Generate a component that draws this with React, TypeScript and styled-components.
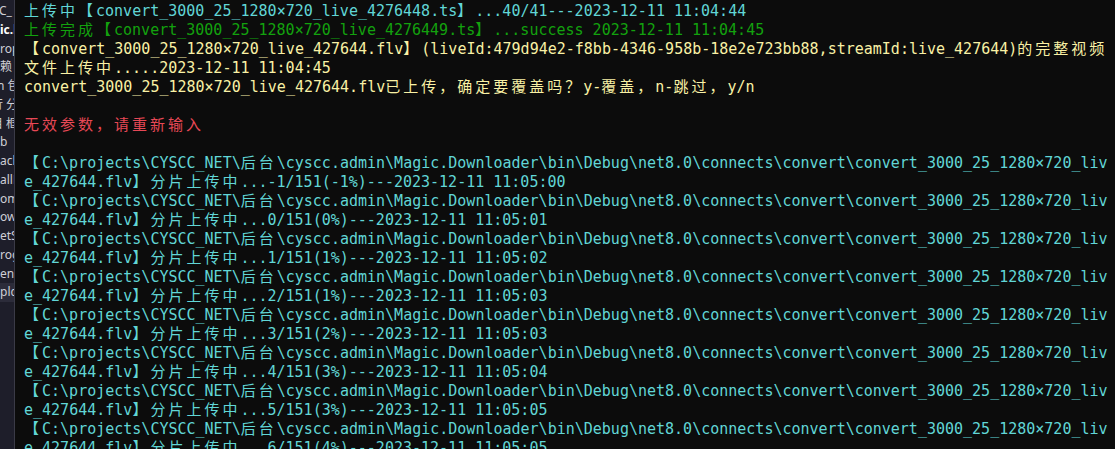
import styled, { createGlobalStyle } from "styled-components";

const CYAN = "#61d6d6";
const GREEN = "#13a10e";
const YELLOW = "#f9f1a5";
const RED = "#e74856";

const GlobalStyle = createGlobalStyle`
  html, body {
    margin: 0;
    padding: 0;
    background: #0c0c0c;
  }
  body {
    width: 1115px;
    height: 449px;
    overflow: hidden;
  }
`;

type Line = { text: string; color?: string };

const navItems: { text: string; shift?: number; bold?: boolean; active?: boolean }[] = [
  { text: "C_", shift: -1 },
  { text: "ic.l", bold: true },
  { text: "rop" },
  { text: "赖" },
  { text: "n 包", shift: -3 },
  { text: "行 分", shift: -9 },
  { text: "目 框", shift: -9 },
  { text: "b" },
  { text: "ach" },
  { text: "allF" },
  { text: "om" },
  { text: "ow" },
  { text: "etS" },
  { text: "rog" },
  { text: "enc" },
  { text: "plc", active: true },
];

const PATH =
  "【C:\\projects\\CYSCC_NET\\后台\\cyscc.admin\\Magic.Downloader\\bin\\Debug\\net8.0\\connects\\convert\\convert_3000_25_1280×720_liv";

const progress: [string, string, string][] = [
  ["-1", "-1", "00"],
  ["0", "0", "01"],
  ["1", "1", "02"],
  ["2", "1", "03"],
  ["3", "2", "03"],
  ["4", "3", "04"],
  ["5", "3", "05"],
  ["6", "4", "05"],
];

const lines: Line[] = [
  { text: "上传中【convert_3000_25_1280×720_live_4276448.ts】...40/41---2023-12-11 11:04:44", color: CYAN },
  { text: "上传完成【convert_3000_25_1280×720_live_4276449.ts】...success 2023-12-11 11:04:45", color: GREEN },
  {
    text: "【convert_3000_25_1280×720_live_427644.flv】(liveId:479d94e2-f8bb-4346-958b-18e2e723bb88,streamId:live_427644)的完整视频",
    color: YELLOW,
  },
  { text: "文件上传中.....2023-12-11 11:04:45", color: YELLOW },
  { text: "convert_3000_25_1280×720_live_427644.flv已上传，确定要覆盖吗？y-覆盖，n-跳过，y/n", color: YELLOW },
  { text: "" },
  { text: "无效参数，请重新输入", color: RED },
  { text: "" },
  ...progress.flatMap(([n, pct, sec]) => [
    { text: PATH, color: CYAN },
    { text: `e_427644.flv】分片上传中...${n}/151(${pct}%)---2023-12-11 11:05:${sec}`, color: CYAN },
  ]),
];

const WIDE = /([\u3000-\u303f\u3400-\u9fff\uff01-\uff60]+)/;

function renderText(text: string) {
  return text
    .split(WIDE)
    .filter(Boolean)
    .map((part, i) => (WIDE.test(part) ? <Wide key={i}>{part}</Wide> : <span key={i}>{part}</span>));
}

export default function App() {
  return (
    <>
      <GlobalStyle />
      <Style.Window>
        <Style.Sidebar>
          {navItems.map((item, i) => (
            <Style.NavRow key={i} $shift={item.shift ?? 0} $bold={item.bold} $active={item.active}>
              {item.text}
            </Style.NavRow>
          ))}
        </Style.Sidebar>
        <Style.Terminal>
          {lines.map((line, i) => (
            <Style.Line key={i} $color={line.color ?? YELLOW}>
              {renderText(line.text)}
            </Style.Line>
          ))}
        </Style.Terminal>
      </Style.Window>
    </>
  );
}

const Wide = styled.span`
  font-family: "Noto Sans CJK SC", sans-serif;
  font-size: 15px;
  letter-spacing: 3px;
  text-spacing-trim: space-all;
`;

const Style = {
  Window: styled.div`
    display: flex;
    width: 1115px;
    height: 449px;
    overflow: hidden;
    background: #0c0c0c;
  `,
  Sidebar: styled.aside`
    flex: none;
    width: 14px;
    display: flex;
    flex-direction: column;
    padding-top: 2px;
    background: #1e1e2a;
    border-right: 1px solid #3b3b47;
    overflow: hidden;
  `,
  NavRow: styled.div<{ $shift: number; $bold?: boolean; $active?: boolean }>`
    flex: none;
    height: 18.75px;
    line-height: 18.75px;
    white-space: nowrap;
    font-family: "Noto Sans", "Noto Sans CJK SC", sans-serif;
    font-size: 12px;
    font-weight: ${({ $bold }) => ($bold ? 700 : 400)};
    color: ${({ $bold }) => ($bold ? "#ffffff" : "#cfcfd6")};
    background: ${({ $active }) => ($active ? "#2c2c3a" : "transparent")};
    text-indent: ${({ $shift }) => $shift}px;
  `,
  Terminal: styled.main`
    flex: 1;
    display: flex;
    flex-direction: column;
    padding: 0 0 0 9px;
    overflow: hidden;
  `,
  Line: styled.div<{ $color: string }>`
    flex: none;
    height: 19px;
    line-height: 19px;
    white-space: pre;
    font-family: "DejaVu Sans Mono", "Liberation Mono", monospace;
    font-size: 15px;
    color: ${({ $color }) => $color};
  `,
};
